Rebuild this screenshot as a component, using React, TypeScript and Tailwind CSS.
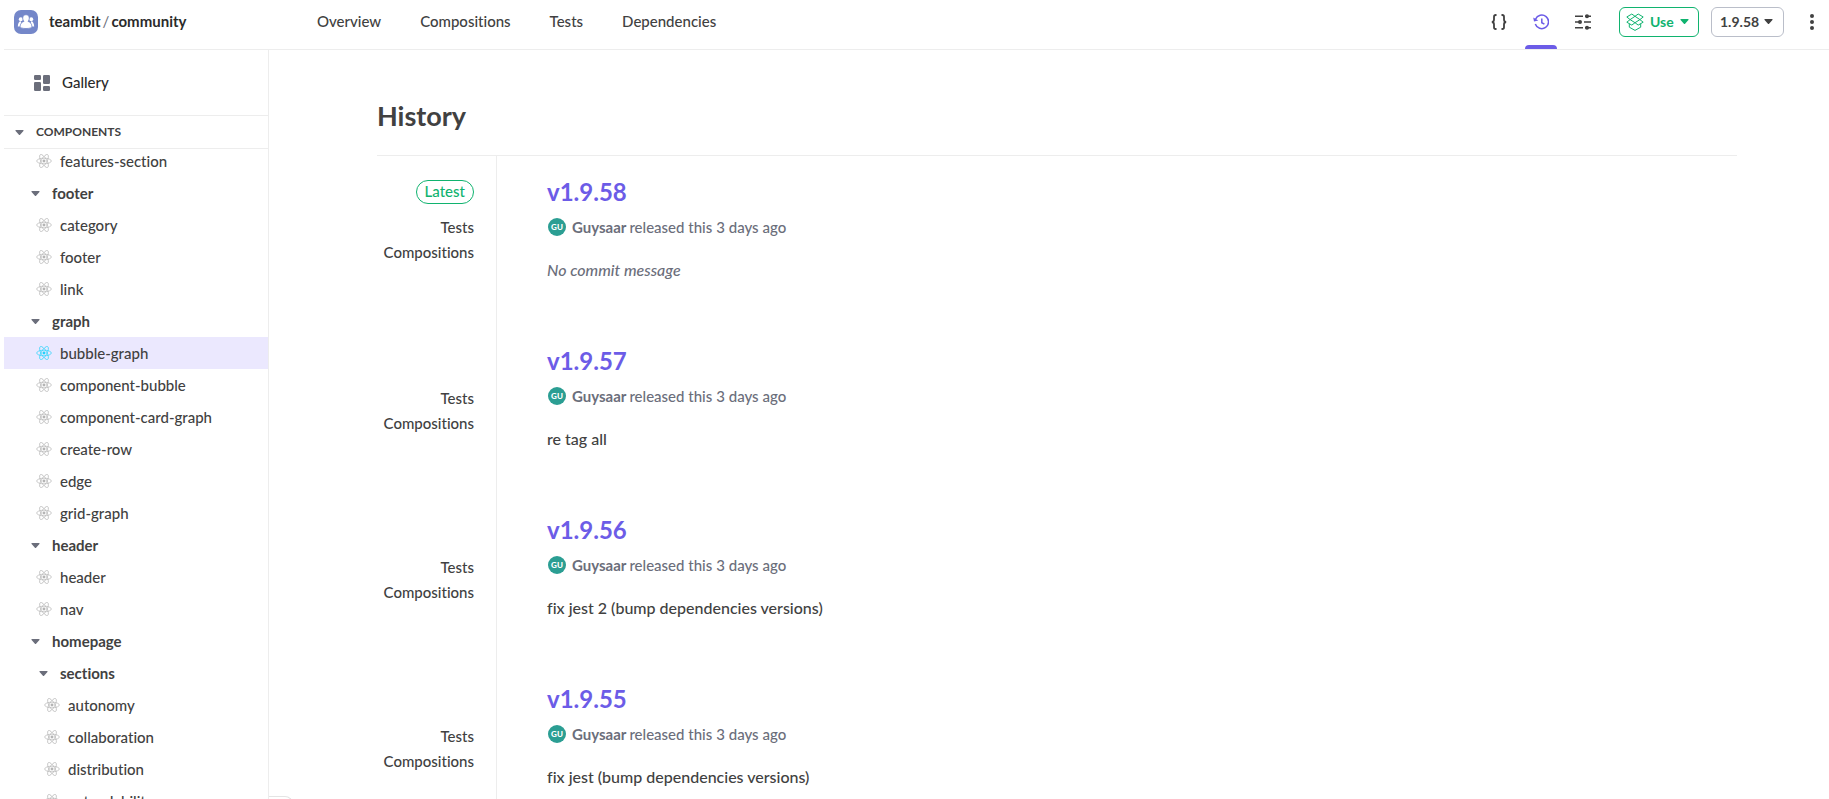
import React from "react";

type TreeItem = { label: string; kind: "folder" | "leaf"; depth: number; active?: boolean };

const tree: TreeItem[] = [
  { label: "features-section", kind: "leaf", depth: 1 },
  { label: "footer", kind: "folder", depth: 1 },
  { label: "category", kind: "leaf", depth: 1 },
  { label: "footer", kind: "leaf", depth: 1 },
  { label: "link", kind: "leaf", depth: 1 },
  { label: "graph", kind: "folder", depth: 1 },
  { label: "bubble-graph", kind: "leaf", depth: 1, active: true },
  { label: "component-bubble", kind: "leaf", depth: 1 },
  { label: "component-card-graph", kind: "leaf", depth: 1 },
  { label: "create-row", kind: "leaf", depth: 1 },
  { label: "edge", kind: "leaf", depth: 1 },
  { label: "grid-graph", kind: "leaf", depth: 1 },
  { label: "header", kind: "folder", depth: 1 },
  { label: "header", kind: "leaf", depth: 1 },
  { label: "nav", kind: "leaf", depth: 1 },
  { label: "homepage", kind: "folder", depth: 1 },
  { label: "sections", kind: "folder", depth: 2 },
  { label: "autonomy", kind: "leaf", depth: 2 },
  { label: "collaboration", kind: "leaf", depth: 2 },
  { label: "distribution", kind: "leaf", depth: 2 },
  { label: "extendability", kind: "leaf", depth: 2 },
];

const releases = [
  { version: "v1.9.58", message: "", latest: true },
  { version: "v1.9.57", message: "re tag all", latest: false },
  { version: "v1.9.56", message: "fix jest 2 (bump dependencies versions)", latest: false },
  { version: "v1.9.55", message: "fix jest (bump dependencies versions)", latest: false },
];

function Caret({ className }: { className?: string }) {
  return (
    <svg viewBox="0 0 10 6" className={`h-[5px] w-[9px] shrink-0 ${className ?? ""}`} fill="currentColor" aria-hidden="true">
      <path d="M1 0h8c.8 0 1.200.8.7 1.300L5.700 5.600c-.4.4-1 .4-1.400 0L.3 1.300C-.2.8.2 0 1 0z" />
    </svg>
  );
}

function ReactIcon({ active }: { active?: boolean }) {
  return (
    <svg viewBox="-12 -11 24 22" className={`h-4 w-4 shrink-0 ${active ? "text-[#22d3fb]" : "text-[#b4b4b4]"}`} fill="none" stroke="currentColor" aria-hidden="true">
      <circle r="2.200" fill="currentColor" stroke="none" />
      <g strokeWidth="1">
        <ellipse rx="11" ry="4.200" />
        <ellipse rx="11" ry="4.200" transform="rotate(60)" />
        <ellipse rx="11" ry="4.200" transform="rotate(120)" />
      </g>
    </svg>
  );
}

function TreeRow({ item }: { item: TreeItem }) {
  if (item.kind === "folder") {
    return (
      <li>
        <button type="button" className={`flex h-8 w-full items-center gap-3 font-bold ${item.depth === 2 ? "pl-[35px]" : "pl-[27px]"}`}>
          <Caret className="text-[#6b6e7b]" />
          {item.label}
        </button>
      </li>
    );
  }
  return (
    <li>
      <a href="#" className={`flex h-8 items-center gap-2 ${item.depth === 2 ? "pl-10" : "pl-8"} ${item.active ? "bg-[#ebe8fe]" : ""}`}>
        <ReactIcon active={item.active} />
        {item.label}
      </a>
    </li>
  );
}

function Header() {
  return (
    <header className="flex h-[50px] shrink-0 items-center border-b border-[#ededed]">
      <a href="#" className="flex w-[264px] shrink-0 items-center gap-[11px] pl-[10px] pb-[6px]">
        <svg viewBox="0 0 24 24" className="h-6 w-6" aria-hidden="true">
          <rect width="24" height="24" rx="7" fill="#7487c9" />
          <g fill="#fff">
            <circle cx="6.800" cy="9.300" r="2" />
            <circle cx="17.200" cy="9.300" r="2" />
            <path d="M3.800 16.600c.2-3.400 1.200-5.300 3-5.300l1.500 5.300zM20.200 16.600c-.2-3.400-1.200-5.300-3-5.300l-1.500 5.300z" />
            <path
              stroke="#7487c9"
              strokeWidth=".8"
              d="M12 4.700c2.100 0 3.300 1.500 3.300 3.500 0 1.400-.5 2.500-1.300 3.200 2.400.6 3.900 2.400 3.900 5.500 0 1-2.700 1.600-5.900 1.600s-5.900-.6-5.900-1.600c0-3.100 1.500-4.900 3.900-5.500-.8-.7-1.300-1.800-1.300-3.200 0-2 1.200-3.500 3.300-3.500z"
            />
          </g>
        </svg>
        <span className="flex gap-[2px] pb-[2px] font-bold text-[#2b2b2b]">
          <span>teambit</span>
          <span className="font-normal text-[#6b6e7b]">/</span>
          <span>community</span>
        </span>
      </a>
      <nav aria-label="Component" className="flex gap-[39px] pb-2 pl-[49px]">
        <a href="#">Overview</a>
        <a href="#">Compositions</a>
        <a href="#">Tests</a>
        <a href="#">Dependencies</a>
      </nav>
      <div className="ml-auto flex h-full items-center pr-px">
        <button type="button" aria-label="Code" className="flex h-full w-8 items-center justify-center pb-[6px]">
          <svg viewBox="0 0 16 16" className="h-4 w-4" fill="none" stroke="currentColor" strokeWidth="1.800" aria-hidden="true">
            <path d="M5.500 1H4.800C3.600 1 3 1.700 3 2.800v2.700C3 7 2.300 8 .8 8 2.300 8 3 9 3 10.500v2.700C3 14.300 3.600 15 4.800 15h.7M10.500 1h.7c1.200 0 1.800.7 1.800 1.800v2.700C13 7 13.700 8 15.200 8 13.700 8 13 9 13 10.500v2.700c0 1.100-.6 1.800-1.800 1.800h-.7" />
          </svg>
        </button>
        <button type="button" aria-label="History" className="ml-[10px] flex h-full w-8 flex-col items-center justify-between text-[#6c5ce7]">
          <svg viewBox="0 0 16 16" className="mt-[14px] h-4 w-4" fill="none" stroke="currentColor" strokeWidth="1.500" aria-hidden="true">
            <path d="M2.500 5.200A6.800 6.800 0 1 1 2.300 10" />
            <path d="M8.800 4.500v4.200l2.600 1.500" />
            <path d="M.2 3.600l.8 4 4.400-1.200z" fill="currentColor" stroke="none" />
          </svg>
          <span className="h-1 w-full rounded-t-sm bg-[#6c5ce7]" />
        </button>
        <button type="button" aria-label="Configuration" className="ml-[10px] flex h-full w-8 items-center justify-center pb-[6px]">
          <svg viewBox="0 0 16 16" className="h-4 w-4" fill="none" stroke="currentColor" strokeWidth="1.600" aria-hidden="true">
            <path d="M0 2.200h8M10 2.200h6M0 8h6M9 8h7M0 13.800h8M10 13.800h6" />
            <g fill="currentColor" stroke="none">
              <circle cx="12" cy="2.200" r="2" />
              <circle cx="5" cy="8" r="2" />
              <circle cx="12" cy="13.800" r="2" />
            </g>
          </svg>
        </button>
        <div className="ml-5 flex items-center gap-3 pb-[6px] text-sm font-bold">
          <button type="button" className="flex h-[30px] w-20 items-center rounded-md border border-[#10b36f] pl-[6px] text-[#10b36f]">
            <svg viewBox="0 0 18 18" className="mr-[6px] h-[18px] w-[18px]" fill="none" stroke="currentColor" strokeWidth="1" strokeLinejoin="round" aria-hidden="true">
              <path d="M9 3.300 5.800 1 .8 4l3.300 2.600L9 3.300 12.200 1l5 3-3.300 2.600zM4.100 6.600.8 9.200l5 2.900L9 9.700l3.200 2.400 5-2.900-3.300-2.600L9 9.700z" />
              <path d="M3.300 10.800v3.400L9 17.400l5.700-3.200v-3.400" />
            </svg>
            Use
            <Caret className="mr-[9px] ml-auto" />
          </button>
          <button type="button" className="flex h-[30px] w-[73px] items-center rounded-md border border-[#babec9] pl-2">
            1.9.58
            <Caret className="mr-[10px] ml-auto" />
          </button>
        </div>
        <button type="button" aria-label="More" className="ml-3 flex h-full w-8 items-center justify-center pb-[6px]">
          <svg viewBox="0 0 4 16" className="h-4 w-1" fill="currentColor" aria-hidden="true">
            <circle cx="2" cy="2" r="2" />
            <circle cx="2" cy="8" r="2" />
            <circle cx="2" cy="14" r="2" />
          </svg>
        </button>
      </div>
    </header>
  );
}

export default function App() {
  return (
    <div className="flex h-screen flex-col overflow-hidden bg-white pl-1 font-['Lato','Liberation_Sans',sans-serif] text-[15px] leading-5 font-medium text-[#414141] [font-variant-ligatures:none]">
      <Header />
      <div className="flex min-h-0 flex-1">
        <aside className="flex w-[265px] shrink-0 flex-col border-r border-[#ededed]">
          <a href="#" className="flex h-[65px] shrink-0 items-center gap-3 pl-[30px] text-[#2b2b2b]">
            <svg viewBox="0 0 16 16" className="h-4 w-4" fill="#6b6e7b" aria-hidden="true">
              <rect width="7" height="5" rx="1.300" />
              <rect y="7" width="7" height="9" rx="1.300" />
              <rect x="9" width="7" height="9" rx="1.300" />
              <rect x="9" y="11" width="7" height="5" rx="1.300" />
            </svg>
            <span className="pb-[2px]">Gallery</span>
          </a>
          <button type="button" className="flex h-[34px] shrink-0 items-center gap-3 border-y border-[#ededed] pl-[11px] text-xs font-bold">
            <Caret className="text-[#6b6e7b]" />
            COMPONENTS
          </button>
          <div className="min-h-0 flex-1 overflow-hidden">
            <ul className="-mt-1">
              {tree.map((item, i) => (
                <TreeRow key={i} item={item} />
              ))}
            </ul>
          </div>
        </aside>
        <main className="relative flex min-w-0 flex-1 flex-col overflow-hidden pr-[92px] pl-[108px]">
          <h1 className="flex h-[106px] shrink-0 items-center border-b border-[#ededed] pt-[26px] text-[27px] font-bold">History</h1>
          {releases.map((r) => (
            <section key={r.version} className="flex h-[169px] shrink-0">
              <div className="flex w-[120px] shrink-0 flex-col items-end border-r border-[#ededed] pt-6 pr-[22px]">
                {r.latest ? (
                  <span className="mb-[11px] flex h-6 items-center rounded-full border border-[#10b36f] px-2 pb-[2px] text-[#10b36f]">Latest</span>
                ) : (
                  <span className="h-[37px]" />
                )}
                <a href="#" className="leading-[25px]">Tests</a>
                <a href="#" className="leading-[25px]">Compositions</a>
              </div>
              <div className="pt-5 pl-[50px]">
                <h2 className="text-2xl leading-8 font-bold text-[#6c5ce7]">{r.version}</h2>
                <p className="mt-[7px] flex h-6 items-center text-[#6b6e7b]">
                  <span className="mr-[6px] ml-px flex h-[18px] w-[18px] items-center justify-center rounded-full bg-[#2b9e93] text-[8px] font-black text-white">GU</span>
                  <span className="mr-[3px] font-bold">Guysaar</span>
                  <span className="mr-1">released this</span>
                  <span>3 days ago</span>
                </p>
                <p className={`mt-[19px] text-base leading-6 ${r.message ? "" : "italic text-[#6b6e7b]"}`}>{r.message || "No commit message"}</p>
              </div>
            </section>
          ))}
          <span className="absolute top-[746px] left-0 h-6 w-6 rounded-tr-lg border-t border-r border-[#e4e4e4] bg-white" />
        </main>
      </div>
    </div>
  );
}
